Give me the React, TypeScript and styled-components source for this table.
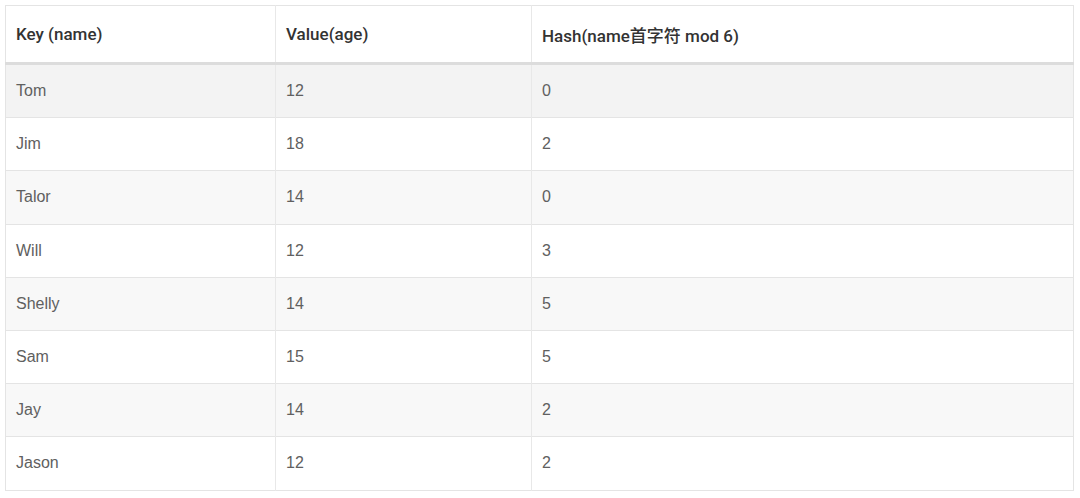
import React from 'react';
import styled, { createGlobalStyle } from 'styled-components';

type Row = { name: string; age: number; hash: number };

const rows: Row[] = [
  { name: 'Tom', age: 12, hash: 0 },
  { name: 'Jim', age: 18, hash: 2 },
  { name: 'Talor', age: 14, hash: 0 },
  { name: 'Will', age: 12, hash: 3 },
  { name: 'Shelly', age: 14, hash: 5 },
  { name: 'Sam', age: 15, hash: 5 },
  { name: 'Jay', age: 14, hash: 2 },
  { name: 'Jason', age: 12, hash: 2 },
];

function App() {
  return (
    <>
      <GlobalStyle />
      <Page>
        <Table>
          <colgroup>
            <col style={{ width: 270 }} />
            <col style={{ width: 256 }} />
            <col />
          </colgroup>
          <thead>
            <tr>
              <Th>Key (name)</Th>
              <Th>Value(age)</Th>
              <Th>Hash(name首字符 mod 6)</Th>
            </tr>
          </thead>
          <tbody>
            {rows.map((row, i) => (
              <BodyRow key={row.name} $striped={i % 2 === 0} $active={i === 0}>
                <Td>{row.name}</Td>
                <Td>{row.age}</Td>
                <Td>{row.hash}</Td>
              </BodyRow>
            ))}
          </tbody>
        </Table>
      </Page>
    </>
  );
}

export default App;

const GlobalStyle = createGlobalStyle`
  html, body {
    margin: 0;
    padding: 0;
    background: #ffffff;
  }
  body {
    font-family: 'Liberation Sans', 'Noto Sans CJK SC', sans-serif;
  }
`;

const Page = styled.div`
  width: 1080px;
  height: 498px;
  padding: 5px 0 0 5px;
  box-sizing: border-box;
`;

const Table = styled.table`
  width: 1069px;
  border-collapse: collapse;
  table-layout: fixed;
  border: 1px solid #e4e4e4;
  font-size: 16px;
`;

const Th = styled.th`
  height: 56px;
  padding: 0 10px;
  text-align: left;
  font-family: Roboto, 'Noto Sans CJK SC', sans-serif;
  font-size: 17px;
  font-weight: 500;
  color: #333333;
  border-left: 1px solid #e8e8e8;
  border-bottom: 3px solid #dcdcdc;
  &:first-child {
    border-left: none;
  }
`;

const BodyRow = styled.tr<{ $striped: boolean; $active: boolean }>`
  background: ${(p) => (p.$active ? '#f3f3f3' : p.$striped ? '#f8f8f8' : '#ffffff')};
`;

const Td = styled.td`
  height: 52.2px;
  padding: 0 10px;
  color: #606060;
  border-left: 1px solid #e8e8e8;
  border-top: 1px solid #e4e4e4;
  &:first-child {
    border-left: none;
  }
`;
